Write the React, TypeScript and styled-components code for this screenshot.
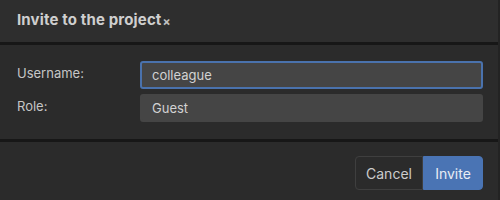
import React, { useState } from "react";
import styled, { createGlobalStyle } from "styled-components";

const GlobalStyle = createGlobalStyle`
  html, body {
    margin: 0;
    padding: 0;
    background: #2b2b2b;
  }
  body {
    font-family: Inter, "Noto Sans", "Liberation Sans", sans-serif;
  }
`;

const Dialog = styled.div`
  width: 500px;
  height: 200px;
  box-sizing: border-box;
  display: flex;
  flex-direction: column;
  background: #2b2b2b;
  border-right: 2px solid #232323;
`;

const Header = styled.div`
  height: 45px;
  box-sizing: border-box;
  display: flex;
  align-items: flex-start;
  padding: 10px 17px 0;
  background: #2e2e2e;
  border-bottom: 3px solid #171717;
`;

const Title = styled.h2`
  margin: 0;
  font-size: 15px;
  font-weight: 700;
  color: #cfcfcf;
  letter-spacing: 0.15px;
`;

const Close = styled.button`
  all: unset;
  font-size: 12px;
  font-weight: 700;
  color: #c2c2c2;
  margin-left: 1px;
  margin-top: 6px;
  line-height: 1;
  cursor: pointer;
`;

const Body = styled.div`
  display: grid;
  grid-template-columns: 123px 1fr;
  row-gap: 5px;
  padding: 16px 15px 17px 17px;
  border-bottom: 3px solid #171717;
`;

const Label = styled.label`
  font-size: 13px;
  color: #c6c6c6;
  padding-top: 4px;
`;

const Field = styled.input<{ $focused?: boolean }>`
  all: unset;
  box-sizing: border-box;
  height: 28px;
  padding: 0 10px;
  font-family: inherit;
  font-size: 13px;
  color: #d2d2d2;
  background: #454545;
  border-radius: 3px;
  border: 2px solid ${(p) => (p.$focused ? "#4a72ad" : "#454545")};
`;

const Footer = styled.div`
  flex: 1;
  display: flex;
  justify-content: flex-end;
  align-items: flex-start;
  padding: 14px 15px 0 0;
`;

const ButtonGroup = styled.div`
  display: flex;
  height: 34px;
`;

const Button = styled.button<{ $primary?: boolean }>`
  all: unset;
  box-sizing: border-box;
  height: 34px;
  font-family: inherit;
  font-size: 14px;
  display: flex;
  align-items: center;
  justify-content: center;
  color: ${(p) => (p.$primary ? "#e8edf5" : "#cccccc")};
  background: ${(p) => (p.$primary ? "#4a74b4" : "#2b2b2b")};
  border: 1px solid ${(p) => (p.$primary ? "#4a74b4" : "#3f3f3f")};
  border-radius: ${(p) => (p.$primary ? "0 4px 4px 0" : "4px 0 0 4px")};
  width: ${(p) => (p.$primary ? "60px" : "68px")};
  cursor: pointer;
`;

export default function App() {
  const [username, setUsername] = useState("colleague");
  const [role, setRole] = useState("Guest");

  return (
    <>
      <GlobalStyle />
      <Dialog>
        <Header>
          <Title>Invite to the project</Title>
          <Close aria-label="Close">×</Close>
        </Header>
        <Body>
          <Label>Username:</Label>
          <Field
            $focused
            value={username}
            onChange={(e) => setUsername(e.target.value)}
          />
          <Label>Role:</Label>
          <Field value={role} onChange={(e) => setRole(e.target.value)} />
        </Body>
        <Footer>
          <ButtonGroup>
            <Button>Cancel</Button>
            <Button $primary>Invite</Button>
          </ButtonGroup>
        </Footer>
      </Dialog>
    </>
  );
}
